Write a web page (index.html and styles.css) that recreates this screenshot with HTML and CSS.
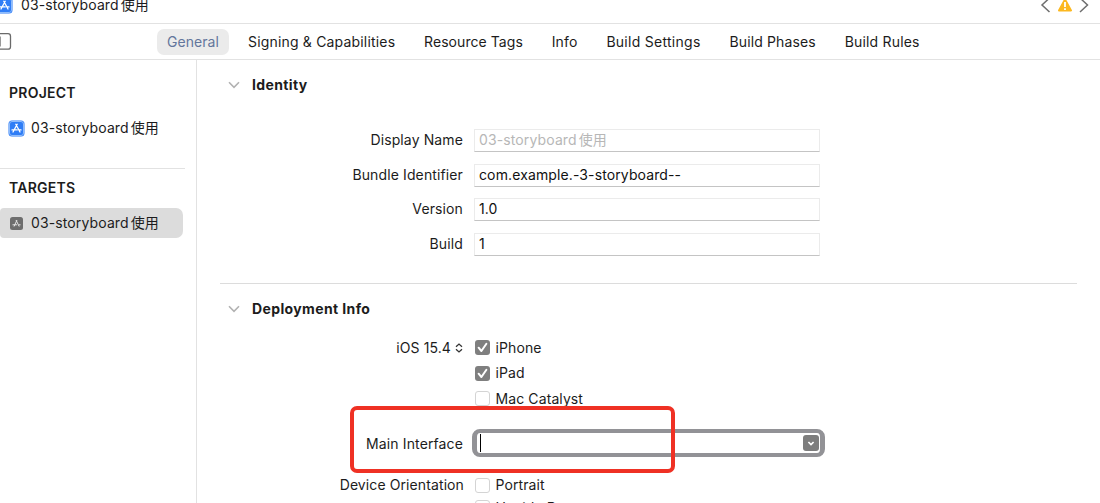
FILE: index.html
```html
<!DOCTYPE html>
<html lang="zh">
<head>
<meta charset="utf-8">
<title>03-storyboard使用</title>
<link rel="stylesheet" href="styles.css">
</head>
<body>
<svg class="defs" width="0" height="0">
  <symbol id="app" viewBox="0 0 17 17">
    <rect x="0.5" y="0.5" width="16" height="16" rx="3.5" fill="#2f7df6"/>
    <rect x="1.5" y="1.5" width="14" height="14" rx="2.5" fill="none" stroke="#8fbcfb" stroke-width="1"/>
    <path d="M9.2 4.200L5 12M7.800 4.200L12 12M4 9.900h5.200M11 9.900h2" fill="none" stroke="#fff" stroke-width="1.300" stroke-linecap="round"/>
  </symbol>
  <symbol id="chev" viewBox="0 0 12 8"><path d="M1 1.200L6 6.400L11 1.200" fill="none" stroke="#b2b2b2" stroke-width="1.600"/></symbol>
  <symbol id="check" viewBox="0 0 15 15"><path d="M3.600 7.700L6.400 11L11.400 3.800" fill="none" stroke="#fff" stroke-width="2" stroke-linecap="round" stroke-linejoin="round"/></symbol>
</svg>
<div class="window">
  <header class="path">
    <svg class="path-icon"><use href="#app"/></svg>
    <span class="path-name">03-storyboard<span class="cjk">使用</span></span>
    <svg class="path-nav" viewBox="0 0 50 16">
      <path d="M9.500 1L2 8l7.500 7M40 1l7.500 7L40 15" fill="none" stroke="#6e6e6e" stroke-width="1.500"/>
      <path d="M25 2.500L31 13.400H19Z" fill="#fcb81f" stroke="#fcb81f" stroke-width="2" stroke-linejoin="round"/>
      <path d="M25 5v5M25 11.300v1.700" stroke="#fff" stroke-width="1.800"/>
    </svg>
  </header>
  <nav class="tabs">
    <svg class="toggle" viewBox="0 0 12 17"><rect x="-8" y="0.700" width="18.500" height="15.500" rx="2.500" fill="none" stroke="#6a6a6a" stroke-width="1.300"/><path d="M0.500 3.500v10" stroke="#999"/></svg>
    <span class="tab active">General</span>
    <span class="tab signing">Signing &amp; Capabilities</span>
    <span class="tab resource">Resource Tags</span>
    <span class="tab">Info</span>
    <span class="tab settings">Build Settings</span>
    <span class="tab phases">Build Phases</span>
    <span class="tab">Build Rules</span>
  </nav>
  <div class="body">
    <aside class="sidebar">
      <h2 class="group">PROJECT</h2>
      <div class="item"><svg class="item-icon"><use href="#app"/></svg><span>03-storyboard<span class="cjk">使用</span></span></div>
      <h2 class="group targets">TARGETS</h2>
      <div class="item selected">
        <svg class="item-icon" viewBox="0 0 17 17"><rect x="2" y="2" width="13" height="13" rx="2.500" fill="#6d6d6d"/><path d="M9 5L6 11.500M8 5l3.200 6.500M4.500 9.800h4.500M10.800 9.800h1.700" fill="none" stroke="#e4e4e4" stroke-width="1"/></svg>
        <span>03-storyboard<span class="cjk">使用</span></span>
      </div>
    </aside>
    <main class="main">
      <h3 class="section"><svg class="chev"><use href="#chev"/></svg>Identity</h3>
      <div class="identity">
        <div class="row"><label>Display Name</label><div class="field hint">03-storyboard<span class="cjk">使用</span></div></div>
        <div class="row"><label>Bundle Identifier</label><div class="field">com.example.-3-storyboard--</div></div>
        <div class="row"><label>Version</label><div class="field">1.0</div></div>
        <div class="row"><label>Build</label><div class="field">1</div></div>
      </div>
      <h3 class="section deploy"><svg class="chev"><use href="#chev"/></svg>Deployment Info</h3>
      <div class="devices">
        <div class="row"><label>iOS 15.4<svg class="updown" viewBox="0 0 8 10"><path d="M1 3.700L4 1l3 2.700M1 6.300L4 9l3-2.700" fill="none" stroke="#333" stroke-width="1.300"/></svg></label><span class="box on"><svg><use href="#check"/></svg></span>iPhone</div>
        <div class="row"><label></label><span class="box on"><svg><use href="#check"/></svg></span>iPad</div>
        <div class="row"><label></label><span class="box"></span>Mac Catalyst</div>
      </div>
      <div class="row interface">
        <label>Main Interface</label>
        <div class="combo"><span class="caret"></span><svg class="drop" viewBox="0 0 16 16"><rect width="16" height="16" rx="3" fill="#7d7d7d"/><path d="M5.400 7L8 9.500L10.600 7" fill="none" stroke="#fff" stroke-width="1.700"/></svg></div>
        <div class="callout"></div>
      </div>
      <div class="devices orient">
        <div class="row"><label>Device Orientation</label><span class="box"></span>Portrait</div>
        <div class="row"><label></label><span class="box"></span>Upside Down</div>
      </div>
    </main>
  </div>
</div>
</body>
</html>
```
FILE: styles.css
```css
* { box-sizing: border-box; }
body { margin: 0; background: #fff; color: #1c1c1c; font: 14px/20px Inter, "Noto Sans CJK SC", sans-serif; letter-spacing: 0.12px; overflow: hidden; }
svg { display: block; flex: none; }
.defs { position: absolute; }
.window { height: 503px; overflow: hidden; display: flex; flex-direction: column; }
.cjk { margin-left: 2px; letter-spacing: 0; }
.path { flex: none; height: 37px; margin-top: -13px; display: flex; align-items: center; border-bottom: 1px solid #e2e2e2; }
.path-icon { width: 17px; height: 17px; margin-left: -4px; }
.path-name { margin-left: 8px; }
.path-nav { width: 50px; height: 16px; margin-left: auto; margin-right: 10px; }
.tabs { flex: none; height: 36px; display: flex; align-items: center; border-bottom: 1px solid #e2e2e2; }
.toggle { width: 12px; height: 17px; margin-right: 145px; }
.tab { margin-right: 28.8px; white-space: nowrap; letter-spacing: 0.18px; }
.active { height: 26px; width: 72px; background: #ebebeb; color: #63769c; border-radius: 7px; padding: 3px 0 3px 10px; margin-right: 19px; letter-spacing: 0.05px; }
.signing { letter-spacing: 0.18px; }
.resource { letter-spacing: 0.06px; }
.settings { letter-spacing: 0.28px; }
.phases { letter-spacing: 0.14px; }
.body { flex: 1; min-height: 0; display: flex; }
.sidebar { width: 197px; border-right: 1px solid #e2e2e2; padding-top: 23px; flex: none; }
.group { margin: 0; padding-left: 9px; font-size: 14px; line-height: 20px; font-weight: 600; letter-spacing: 0.25px; }
.item { height: 30px; margin-top: 10px; width: 183px; display: flex; align-items: center; gap: 6px; padding-left: 8px; border-radius: 4px 7px 7px 4px; }
.item-icon { width: 17px; height: 17px; }
.targets { width: 185px; margin-top: 25px; padding-top: 9px; border-top: 1px solid #e2e2e2; }
.selected { background: #dcdcdc; }
.main { flex: 1; padding-top: 15px; }
.section { margin: 0 0 0 31px; font-size: 14px; line-height: 20px; font-weight: 700; letter-spacing: 0.38px; display: flex; align-items: center; }
.chev { width: 12px; height: 8px; margin-right: 12px; }
.row { display: flex; align-items: center; }
label { width: 266px; margin-right: 11px; display: flex; align-items: center; justify-content: flex-end; white-space: nowrap; }
.identity { margin-top: 34px; display: flex; flex-direction: column; gap: 11.7px; }
.identity label { padding-bottom: 1px; }
.field { width: 346px; height: 23px; border: 1px solid #ebebeb; border-bottom-color: #c4c4c4; padding-left: 4px; line-height: 20px; color: #111; }
.hint { color: #b7b7b7; }
.deploy { margin: 27px 23px 0 23px; padding: 15px 0 0 8px; border-top: 1px solid #dcdcdc; }
.devices { margin-top: 18.5px; display: flex; flex-direction: column; gap: 5.7px; letter-spacing: 0.1px; }
.updown { width: 8px; height: 10px; margin-left: 4px; }
.box { width: 15px; height: 15px; margin: 0 5.5px 0 1px; border: 1px solid #d4d4d4; border-radius: 3px; }
.on { border: 0; background: #7f7f7f; }
.on svg { width: 15px; height: 15px; }
.interface { position: relative; margin-top: 20.5px; }
.interface label { padding-top: 1px; }
.combo { width: 353px; height: 28px; margin-left: -2px; border: 4px solid #929296; border-left-width: 5px; border-right-width: 5px; border-radius: 8px; display: flex; align-items: center; justify-content: space-between; padding: 0 1px 0 3px; }
.caret { width: 1px; height: 18px; background: #000; }
.drop { width: 16px; height: 16px; }
.callout { position: absolute; left: 153px; top: -23px; width: 325px; height: 67px; border: 4px solid #ef3124; border-radius: 7px; }
.orient { margin-top: 18px; gap: 2.5px; }
.orient label { width: 267px; margin-right: 10px; }
```
